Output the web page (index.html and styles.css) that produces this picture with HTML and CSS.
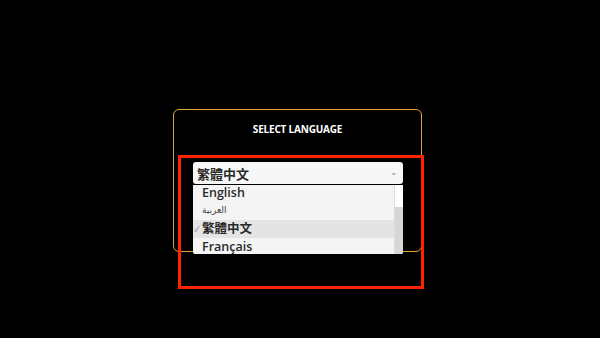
FILE: index.html
```html
<!DOCTYPE html>
<html lang="en">
<head>
    <meta charset="UTF-8">
    <meta name="viewport" content="width=device-width, initial-scale=1.0">
    <title>Select Language</title>
    <link rel="stylesheet" href="styles.css">
</head>
<body>
    <div class="language-card">
        <h1>SELECT LANGUAGE</h1>
        <div class="select-wrap">
            <div class="select-box">
                <span>繁體中文</span>
                <span class="chevron">&#8964;</span>
            </div>
            <!-- lista aberta do select -->
            <div class="dropdown">
                <ul class="options">
                    <li>English</li>
                    <li class="arabic" lang="ar">العربية</li>
                    <li class="selected"><span class="check">&#10003;</span>繁體中文</li>
                    <li>Français</li>
                </ul>
                <div class="scrollbar"><div class="thumb"></div></div>
            </div>
        </div>
    </div>
    <div class="highlight-box"></div>
</body>
</html>
```
FILE: styles.css
```css
body {
    margin: 0;
    background: #000;
    font-family: "Open Sans", "Noto Sans CJK TC", sans-serif;
    width: 600px;
    height: 338px;
    overflow: hidden;
    position: relative;
}
.language-card {
    margin: 109px 0 0 173px;
    width: 249px;
    height: 143px;
    box-sizing: border-box;
    border: 1px solid #e0a238;
    border-radius: 6px;
    padding-top: 12px;
}
h1 {
    margin: 0;
    color: #fff;
    font-size: 10px;
    font-weight: bold;
    text-align: center;
    letter-spacing: -0.2px;
    line-height: 14px;
}
.select-wrap {
    position: relative;
    margin: 26px 0 0 19px;
    width: 210px;
}
.select-box {
    display: flex;
    justify-content: space-between;
    align-items: center;
    height: 22px;
    padding: 0 5px 0 4px;
    box-sizing: border-box;
    background: #f7f7f7;
    border-radius: 3px;
    color: #2a2a2a;
    font-size: 13px;
    font-weight: 600;
}
.chevron {
    font-size: 9px;
    color: #888;
    font-weight: normal;
    margin-top: -4px;
}
.dropdown {
    position: absolute;
    top: 23px;
    left: 0;
    width: 210px;
    height: 69px;
    background: #f4f4f4;
    overflow: hidden;
    display: flex;
    border-radius: 0 0 2px 2px;
}
.options {
    list-style: none;
    margin: 0;
    padding: 0;
    flex: 1;
}
.options li {
    height: 18.5px;
    line-height: 18.5px;
    padding-left: 9px;
    font-size: 12.5px;
    font-weight: 600;
    color: #2a2a2a;
    position: relative;
}
.options li:first-child {
    height: 16px;
    line-height: 16px;
}
.options .arabic {
    font-family: "DejaVu Sans", sans-serif;
    font-size: 9px;
    font-weight: normal;
    color: #444;
}
.options .selected {
    background: #e4e4e4;
}
.check {
    position: absolute;
    left: 1px;
    font-size: 8px;
    color: #888;
    font-weight: normal;
}
.scrollbar {
    width: 8px;
    background: #d6d6d6;
    border-left: 1px solid #ddd;
}
.thumb {
    height: 22px;
    background: #fff;
}
.highlight-box {
    position: absolute;
    left: 178px;
    top: 155px;
    width: 240px;
    height: 128px;
    border: 3px solid #ff2200;
}
```
